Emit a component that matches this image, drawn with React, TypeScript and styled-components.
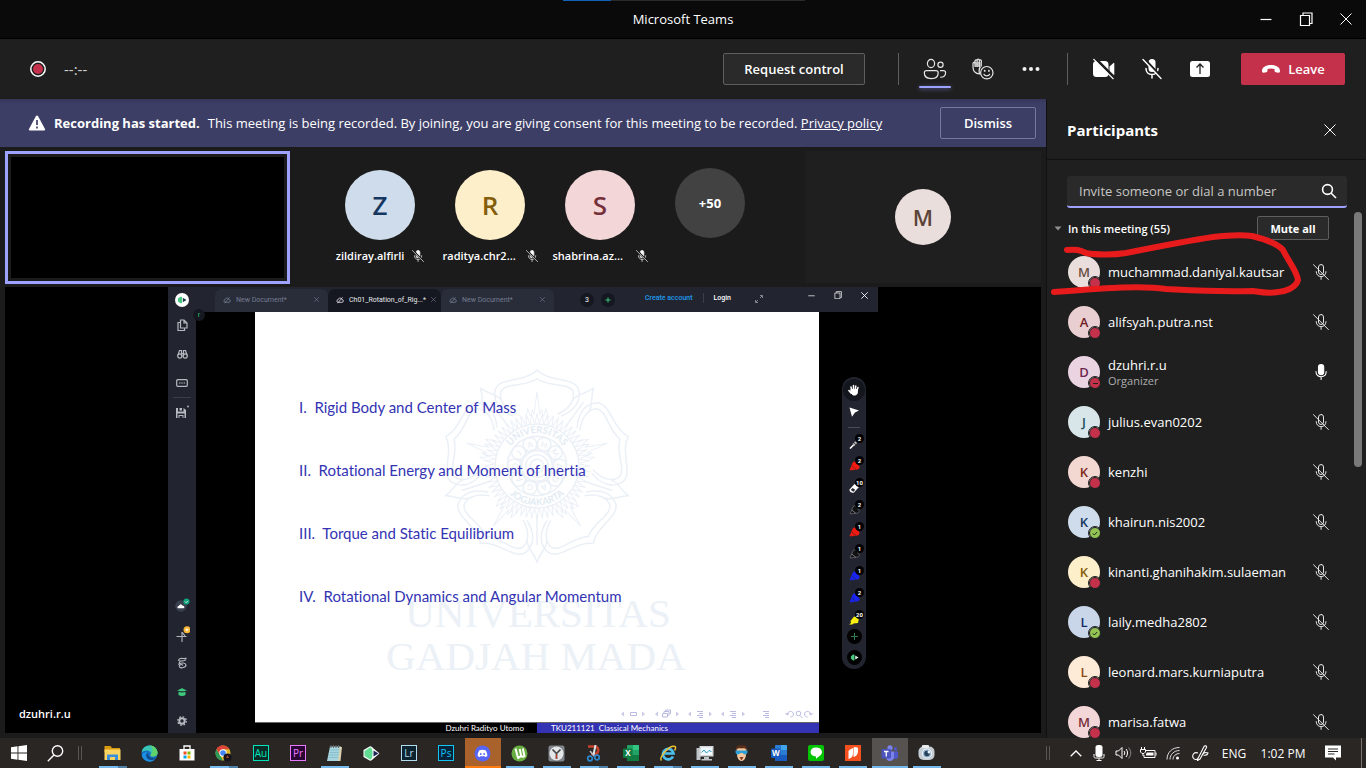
import React from "react";
import styled, { createGlobalStyle, css } from "styled-components";

const GlobalStyle = createGlobalStyle`
  * { box-sizing: border-box; }
  body { margin: 0; background: #1b1b1b; }
  button, input { font-family: inherit; }
  button { cursor: pointer; }
  svg { display: block; flex: none; }
`;

const Shell = styled.div`
  display: flex;
  flex-direction: column;
  height: 100vh;
  overflow: hidden;
  font-family: "Open Sans", "Noto Sans", sans-serif;
  font-size: 13px;
  color: #fff;
  background: #1b1b1b;
`;

/* ---------- title bar ---------- */

const TitleBar = styled.header`
  position: relative;
  display: flex;
  align-items: center;
  justify-content: flex-end;
  flex: none;
  height: 39px;
  background: #0a0a0a;
  border-bottom: 1px solid #000;
`;

const LoadLine = styled.div`
  position: absolute;
  top: 0;
  left: 50%;
  width: 242px;
  height: 1px;
  margin-left: -120px;
  background: linear-gradient(to right, #0f62b8 48px, #2a2a2a 48px);
`;

const WindowTitle = styled.h1`
  position: absolute;
  inset: 0;
  margin: 0;
  font-size: 13px;
  font-weight: 400;
  line-height: 38px;
  text-align: center;
  pointer-events: none;
`;

const WindowButton = styled.button`
  display: flex;
  align-items: center;
  justify-content: center;
  width: 40px;
  height: 38px;
  padding: 0;
  border: 0;
  background: none;
  color: #fff;
`;

/* ---------- call toolbar ---------- */

const CallBar = styled.div`
  display: flex;
  align-items: center;
  flex: none;
  height: 60px;
  padding: 0 21px 0 30px;
  background: #1f1f1f;
`;

const Timer = styled.span`
  flex: 1;
  padding-left: 18px;
  font-size: 15px;
  color: #d0d0d0;
`;

const OutlineButton = styled.button<{ $width: number; $small?: boolean; $clear?: boolean }>`
  width: ${(p) => p.$width}px;
  height: ${(p) => (p.$small ? 24 : 32)}px;
  padding: 0;
  border: 1px solid ${(p) => (p.$clear ? "#77789c" : "#605e5c")};
  border-radius: 2px;
  background: ${(p) => (p.$clear ? "transparent" : "#2a2a2a")};
  color: #fff;
  font-size: ${(p) => (p.$small ? 11 : 13)}px;
  font-weight: ${(p) => (p.$small ? 700 : 600)};
  flex: none;
`;

const Divider = styled.div<{ $first?: boolean }>`
  width: 1px;
  height: 32px;
  margin: 0 12px 0 ${(p) => (p.$first ? 33 : 12)}px;
  background: #605e5c;
`;

const CallButton = styled.button<{ $active?: boolean }>`
  position: relative;
  display: flex;
  align-items: center;
  justify-content: center;
  width: 48px;
  height: 48px;
  padding: 0;
  border: 0;
  background: none;
  color: #fff;
  ${(p) =>
    p.$active &&
    css`
      &::after {
        content: "";
        position: absolute;
        left: 8px;
        right: 8px;
        bottom: 5px;
        height: 2px;
        border-radius: 1px;
        background: #9ea2ff;
        box-shadow: 0 1px 4px #6264a7;
      }
    `}
`;

const LeaveButton = styled.button`
  display: flex;
  align-items: center;
  justify-content: center;
  gap: 7px;
  width: 104px;
  height: 32px;
  margin-left: 17px;
  padding: 0;
  border: 0;
  border-radius: 2px;
  background: #c4314b;
  color: #fff;
  font-size: 13px;
  font-weight: 600;
`;

/* ---------- body ---------- */

const Body = styled.div`
  display: flex;
  flex: 1;
  min-height: 0;
`;

const Meeting = styled.main`
  display: flex;
  flex-direction: column;
  flex: 1;
  min-width: 0;
`;

const Banner = styled.section`
  display: flex;
  align-items: center;
  flex: none;
  height: 48px;
  padding: 0 10px 0 28px;
  background: linear-gradient(#35365a, #3d3e66 5px);
`;

const BannerText = styled.p`
  flex: 1;
  margin: 0 0 0 8px;
  font-size: 13px;
  font-weight: 500;
  line-height: 20px;
  white-space: nowrap;
  b { margin-right: 8px; font-weight: 700; }
  a { color: #fff; }
`;

const Strip = styled.section`
  display: flex;
  align-items: flex-start;
  flex: none;
  height: 140px;
  padding: 4px 5px 0;
`;

const VideoTile = styled.div`
  width: 285px;
  height: 133px;
  padding: 3px;
  border: 3px solid #9ea2ff;
  background: #000 content-box;
  flex: none;
`;

const Attendees = styled.ul`
  display: flex;
  flex: 1;
  margin: 0;
  padding: 19px 0 0 35px;
  list-style: none;
`;

const Attendee = styled.li`
  display: flex;
  flex-direction: column;
  align-items: center;
  gap: 6px;
  width: 110px;
`;

const Avatar = styled.span<{ $bg: string; $fg: string; $size: number }>`
  position: relative;
  display: flex;
  align-items: center;
  justify-content: center;
  flex: none;
  width: ${(p) => p.$size}px;
  height: ${(p) => p.$size}px;
  border-radius: 50%;
  background: ${(p) => p.$bg};
  color: ${(p) => p.$fg};
  font-size: ${(p) => (p.$size > 60 ? 26 : p.$size > 40 ? 22 : 13)}px;
  font-weight: 600;
`;

const AttendeeName = styled.span<{ $clipped?: boolean }>`
  display: flex;
  align-items: center;
  gap: 8px;
  font-size: 11px;
  line-height: 20px;
  font-weight: 600;
  white-space: nowrap;
  span { ${(p) => p.$clipped && "width: 75px;"} }
`;

const MoreBubble = styled.button`
  width: 70px;
  height: 70px;
  margin: -2px 0 0 20px;
  padding: 0;
  border: 0;
  border-radius: 50%;
  background: #424242;
  color: #fff;
  font-size: 13px;
  font-weight: 700;
`;

const SelfTile = styled.div`
  display: flex;
  align-items: center;
  justify-content: center;
  width: 236px;
  height: 132px;
  background: #1f1f1f;
`;

const Stage = styled.section`
  position: relative;
  display: flex;
  justify-content: center;
  flex: 1;
  min-height: 0;
  margin: 0 5px 5px;
  background: #000;
`;

const PresenterName = styled.span`
  position: absolute;
  left: 14px;
  bottom: 10px;
  font-size: 11px;
  line-height: 18px;
  font-weight: 600;
`;

/* ---------- shared screen ---------- */

const Screen = styled.div`
  position: relative;
  display: flex;
  flex-direction: column;
  height: 100%;
  aspect-ratio: 710 / 446;
  font-family: Roboto, sans-serif;
  font-size: 7px;
`;

const AppBar = styled.div`
  display: flex;
  align-items: center;
  flex: none;
  height: 25px;
  padding: 0 10px 0 7px;
  background: #22252f;
`;

const TabList = styled.div`
  display: flex;
  align-self: stretch;
  margin-left: 26px;
  padding-top: 2px;
`;

const DocTab = styled.button<{ $active?: boolean }>`
  display: flex;
  align-items: center;
  gap: 5px;
  width: 113px;
  padding: 0 9px 2px 8px;
  border: 0;
  border-radius: 7px 7px 0 0;
  background: ${(p) => (p.$active ? "#151820" : "#292d39")};
  color: ${(p) => (p.$active ? "#e6e8ec" : "#747c90")};
  font-size: 7px;
  white-space: nowrap;
  span { flex: 1; text-align: left; }
`;

const Dot = styled.button<{ $bg: string; $size: number; $gap?: number }>`
  display: flex;
  align-items: center;
  justify-content: center;
  flex: none;
  width: ${(p) => p.$size}px;
  height: ${(p) => p.$size}px;
  margin: 0 0 0 ${(p) => p.$gap ?? 0}px;
  padding: 0;
  border: 0;
  border-radius: 50%;
  background: ${(p) => p.$bg};
  color: #fff;
  font-size: 7px;
`;

const AccountLinks = styled.div`
  display: flex;
  align-items: center;
  gap: 10px;
  margin-left: 30px;
  padding-bottom: 3px;
  font-weight: 500;
  line-height: 10px;
  white-space: nowrap;
  a { color: #fff; text-decoration: none; }
  a:first-child { padding-right: 10px; border-right: 1px solid #3a3f4c; color: #1d9bf0; }
`;

const AppBarEnd = styled.div`
  display: flex;
  flex: 1;
  align-items: center;
  justify-content: flex-end;
  gap: 19px;
  padding-bottom: 9px;
  svg:first-child { margin: 8px 26px 0 0; }
`;

const Workspace = styled.div`
  display: flex;
  flex: 1;
  min-height: 0;
  background: #000;
`;

const Rail = styled.nav`
  position: relative;
  display: flex;
  flex-direction: column;
  justify-content: space-between;
  width: 28px;
  padding-top: 1px;
  flex: none;
  background: #22252f;
`;

const RailGroup = styled.div`
  display: flex;
  flex-direction: column;
  align-items: center;
  gap: 5px;
`;

const RailRule = styled.div`
  width: 18px;
  height: 1px;
  margin: -3px 0;
  background: #3a3e4a;
`;

const RailButton = styled.button`
  display: flex;
  align-items: center;
  justify-content: center;
  width: 28px;
  height: 24px;
  padding: 0;
  border: 0;
  background: none;
  color: #b6b9c0;
`;

const RailHandle = styled.span`
  position: absolute;
  top: -3px;
  right: -9px;
  width: 12px;
  height: 12px;
  border-radius: 50%;
  background: #151820;
  color: #2fae6a;
  font-size: 8px;
  line-height: 11px;
  text-align: center;
`;

const Slide = styled.article`
  position: relative;
  display: flex;
  flex-direction: column;
  flex: 1;
  margin: 0 59px;
  background: #fff;
  color: #3333b3;
  font-family: Lato, sans-serif;
  font-variant-ligatures: none;
`;

const Watermark = styled.svg`
  position: absolute;
  top: 0;
  left: 50%;
  margin-left: -282px;
`;

const Outline = styled.ol`
  position: relative;
  display: flex;
  flex-direction: column;
  flex: 1;
  gap: 43px;
  margin: 0;
  padding: 85px 0 0 44px;
  list-style: none;
  font-size: 15px;
  line-height: 20px;
  white-space: pre;
`;

const SlideNav = styled.div`
  position: relative;
  display: flex;
  justify-content: flex-end;
  padding: 0 6px 3px 0;
`;

const SlideFooter = styled.footer`
  display: flex;
  flex: none;
  height: 11px;
  border-top: 1px solid #666;
  color: #fff;
  font-size: 8px;
  line-height: 11px;
  white-space: pre;
  span:first-child { width: 50%; padding-right: 13px; background: #000; text-align: right; }
  span:last-child { width: 50%; padding-left: 14px; background: #3333b3; }
`;

const ToolPill = styled.div`
  position: absolute;
  top: 90px;
  right: 12px;
  display: flex;
  flex-direction: column;
  align-items: center;
  width: 24px;
  height: 292px;
  padding-top: 2px;
  border-radius: 12px;
  background: #22252f;
`;

const PillRule = styled.div`
  width: 12px;
  height: 1px;
  margin: 4px 0 3px;
  background: #4a4e5a;
`;

const Tool = styled.button<{ $on?: boolean }>`
  position: relative;
  display: flex;
  align-items: center;
  justify-content: center;
  width: 22px;
  height: 22px;
  padding: 0;
  border: 0;
  border-radius: 50%;
  flex: none;
  background: ${(p) => (p.$on ? "#14161d" : "none")};
  color: #fff;
`;

const ToolCount = styled.span`
  position: absolute;
  top: 3px;
  right: 1px;
  width: 9px;
  height: 9px;
  border-radius: 50%;
  background: #000;
  color: #fff;
  font-size: 6px;
  font-weight: 700;
  line-height: 9px;
  text-align: center;
`;

const PillEnd = styled.div`
  display: flex;
  flex-direction: column;
  gap: 6px;
`;

/* ---------- participants ---------- */

const Panel = styled.aside`
  position: relative;
  display: flex;
  flex-direction: column;
  width: 320px;
  flex: none;
  overflow: hidden;
  border-left: 1px solid #111;
  background: #1f1f1f;
`;

const PanelHeader = styled.div`
  display: flex;
  align-items: center;
  justify-content: space-between;
  flex: none;
  height: 61px;
  padding: 2px 28px 0 20px;
  border-bottom: 1px solid #111;
  h2 { margin: 0; font-size: 15px; font-weight: 700; }
  button { width: 16px; height: 24px; }
`;

const InviteBox = styled.label`
  display: flex;
  align-items: center;
  flex: none;
  height: 32px;
  margin: 16px 19px 0 20px;
  padding-right: 10px;
  border-radius: 3px;
  border-bottom: 2px solid #9ea2ff;
  background: #2a2a2a;
  input {
    flex: 1;
    min-width: 0;
    padding: 0 0 0 12px;
    border: 0;
    outline: 0;
    background: none;
    color: #fff;
    font-size: 13px;
    font-weight: 500;
  }
  input::placeholder { color: #c8c6c4; opacity: 1; }
`;

const GroupHeader = styled.div`
  display: flex;
  align-items: center;
  flex: none;
  height: 39px;
  padding: 1px 37px 0 7px;
  span { flex: 1; padding-left: 6px; font-size: 11px; font-weight: 600; }
`;

const Roster = styled.ul`
  flex: 1;
  min-height: 0;
  margin: 0;
  padding: 0;
  overflow: hidden;
  list-style: none;
`;

const RosterRow = styled.li`
  display: flex;
  align-items: center;
  gap: 8px;
  height: 50px;
  padding: 0 37px 0 21px;
`;

const RosterName = styled.div`
  flex: 1;
  font-weight: 500;
  line-height: 18px;
  white-space: nowrap;
  small { display: block; color: #adadad; font-size: 11px; font-weight: 500; line-height: 14px; }
`;

const Presence = styled.span<{ $state: Status }>`
  position: absolute;
  right: -1px;
  bottom: -1px;
  display: flex;
  align-items: center;
  justify-content: center;
  width: 12px;
  height: 12px;
  border: 1px solid #1f1f1f;
  outline: 1px solid #1f1f1f;
  border-radius: 50%;
  background: ${(p) => (p.$state === "free" ? "#92c353" : "#c4314b")};
`;

const ScrollThumb = styled.div`
  position: absolute;
  top: 113px;
  right: 4px;
  width: 8px;
  height: 255px;
  border-radius: 4px;
  background: #797979;
`;

const Scribble = styled.svg`
  position: absolute;
  top: 0;
  left: -1px;
  pointer-events: none;
`;

/* ---------- taskbar ---------- */

const Taskbar = styled.footer`
  display: flex;
  flex: none;
  height: 30px;
  background: #2a2624;
`;

const TaskButton = styled.button<{ $run?: Run }>`
  position: relative;
  display: flex;
  align-items: center;
  justify-content: center;
  width: 37px;
  height: 30px;
  padding: 0;
  border: 0;
  background: ${(p) =>
    p.$run === "alert"
      ? "linear-gradient(to right, transparent 1px, #a9622b 1px)"
      : p.$run === "front"
        ? "linear-gradient(to right, transparent 1px, #565250 1px)"
        : "none"};
  ${(p) =>
    p.$run &&
    css`
      &::after {
        content: "";
        position: absolute;
        left: ${p.$run === "alert" || p.$run === "front" ? 1 : 5}px;
        right: ${p.$run === "alert" || p.$run === "front" ? 0 : 4}px;
        bottom: 0;
        height: 2px;
        background: ${p.$run === "alert"
          ? "#ff7a0f"
          : p.$run === "stack"
            ? "linear-gradient(to right, #76b9ed 19px, #4f80a8 19px)"
            : "#76b9ed"};
      }
    `}
`;

const Gripper = styled.div`
  width: 4px;
  height: 14px;
  margin: 8px 0 0;
  border: solid #5a5653;
  border-width: 0 1px;
`;

const PinnedApps = styled.div`
  display: flex;
  flex: 1;
  padding-left: 12px;
`;

const StartGroup = styled.div`
  display: flex;
  width: 78px;
`;

const Tray = styled.div`
  display: flex;
  align-items: center;
  padding-left: 17px;
`;

const TrayButton = styled.button<{ $width: number }>`
  display: flex;
  align-items: center;
  justify-content: center;
  width: ${(p) => p.$width}px;
  height: 30px;
  padding: 0;
  border: 0;
  background: none;
  color: #fff;
  font-size: 12px;
  white-space: nowrap;
`;

const DesktopEdge = styled.div`
  width: 5px;
  height: 30px;
  margin-left: 10px;
  border-left: 1px solid #77736f;
`;

/* ---------- data ---------- */

type Status = "busy" | "dnd" | "free";
type Run = "open" | "stack" | "alert" | "front";

const attendees = [
  { letter: "Z", name: "zildiray.alfirli", bg: "#cedceb", fg: "#15365f" },
  { letter: "R", name: "raditya.chr2...", bg: "#feefcb", fg: "#845e0b", clipped: true },
  { letter: "S", name: "shabrina.az...", bg: "#f3d6d8", fg: "#75303b", clipped: true },
];

const roster: { name: string; bg: string; fg: string; state: Status; role?: string }[] = [
  { name: "muchammad.daniyal.kautsar", bg: "#e9dedb", fg: "#6a4e43", state: "busy" },
  { name: "alifsyah.putra.nst", bg: "#e9cfd1", fg: "#6b1d26", state: "busy" },
  { name: "dzuhri.r.u", bg: "#ebd4e2", fg: "#69294f", state: "dnd", role: "Organizer" },
  { name: "julius.evan0202", bg: "#d8e6ea", fg: "#22535f", state: "busy" },
  { name: "kenzhi", bg: "#f3d7d1", fg: "#7c2b1e", state: "busy" },
  { name: "khairun.nis2002", bg: "#cedceb", fg: "#15365f", state: "free" },
  { name: "kinanti.ghanihakim.sulaeman", bg: "#feefcb", fg: "#845e0b", state: "busy" },
  { name: "laily.medha2802", bg: "#c9d5e9", fg: "#152c66", state: "free" },
  { name: "leonard.mars.kurniaputra", bg: "#fdead7", fg: "#8a4b12", state: "busy" },
  { name: "marisa.fatwa", bg: "#f3d6d8", fg: "#75303b", state: "busy" },
];

const tools: { kind: string; color: string; count: number }[] = [
  { kind: "brush", color: "#fff", count: 2 },
  { kind: "pen", color: "#f21a10", count: 2 },
  { kind: "eraser", color: "#fff", count: 10 },
  { kind: "pen", color: "#111", count: 2 },
  { kind: "pen", color: "#f21a10", count: 1 },
  { kind: "pen", color: "#111", count: 1 },
  { kind: "pen", color: "#1a24f0", count: 1 },
  { kind: "pen", color: "#1a24f0", count: 2 },
  { kind: "marker", color: "#f8ee10", count: 20 },
];

/* ---------- icons ---------- */

const MicOff = ({ size = 16, filled = false }: { size?: number; filled?: boolean }) => (
  <svg width={size} height={size} viewBox="0 0 16 16" fill="none" stroke="#e6e6e6" strokeWidth="1" strokeLinecap="round">
    <rect x="5.500" y="0.500" width="5" height="10" rx="2.500" fill={filled ? "#fff" : "none"} />
    <path d="M3.2 7.6c0 3 2 5 4.900 5s4.900-2 4.900-5M8.100 12.800v2.600" />
    {filled && <path d="M1 0.400 16 15.800" stroke="#1b1b1b" strokeWidth="2.600" />}
    <path d="M0.500 0.700 15.500 15.600" />
  </svg>
);

const MicOn = ({ size = 16 }: { size?: number }) => (
  <svg width={size} height={size} viewBox="0 0 16 16" fill="none" stroke="#fff" strokeWidth="1.100" strokeLinecap="round">
    <rect x="5.500" y="0.600" width="5.200" height="10" rx="2.600" fill="#fff" />
    <path d="M3 7.600c0 3.200 2 5.100 5.100 5.100s5.100-1.900 5.100-5.100M8.100 12.800v2.600" />
  </svg>
);

const Cross = ({ size, color = "#fff", w = 1 }: { size: number; color?: string; w?: number }) => (
  <svg width={size} height={size} viewBox="0 0 12 12" stroke={color} strokeWidth={w} fill="none">
    <path d="M0.500 0.500 11.500 11.500M11.500 0.500 0.500 11.500" />
  </svg>
);

const RestoreGlyph = ({ size }: { size: number }) => (
  <svg width={size} height={size} viewBox="0 0 14 14" stroke="#fff" strokeWidth="1.200" fill="none">
    <path d="M1.500 3.500h9v10h-9zM4 3V1h9v10.500h-2" />
  </svg>
);

const Dash = ({ size }: { size: number }) => (
  <svg width={size} height={size} viewBox="0 0 12 12" stroke="#fff" fill="none">
    <path d="M0.500 6.500h11" strokeWidth="1.200" />
  </svg>
);

const PeopleIcon = () => (
  <svg width="24" height="24" viewBox="0 0 24 24" fill="none" stroke="#e6e6e6" strokeWidth="1.200">
    <ellipse cx="8" cy="6.500" rx="3.600" ry="4.100" />
    <circle cx="17.500" cy="7.800" r="2.600" />
    <path d="M5.500 13.700h7.300c1.500 0 2.400.9 2.400 2 0 3.700-2.800 5.900-7 5.900s-6.900-2.200-6.900-5.900c0-1.100.9-2 2.400-2z" />
    <path d="M17 13.700h3.200c1.500 0 2.400.9 2.400 2 0 3.100-2.200 4.800-5.400 4.500" />
  </svg>
);

const ReactIcon = () => (
  <svg width="24" height="24" viewBox="0 0 24 24" fill="none" stroke="#e6e6e6" strokeWidth="1.200" strokeLinecap="round">
    <path d="M2 10V6.500c0-1.400 2-1.400 2 0V4c0-1.600 2.100-1.600 2.100 0v-.8c0-1.500 2.200-1.500 2.200 0V4c0-1.400 2.100-1.400 2.100 0v4.500c-1.500 1.400-2.400 3.400-2.300 5.500 0 1.200.2 2.200.6 3C4.500 16.700 2 14 2 10z" />
    <path d="M4 5h6.400v5H4z" fill="#9a9a9a" stroke="none" />
    <path d="M4 5v4.500M6.100 4v5.500M8.300 4v5.500" />
    <circle cx="15.800" cy="15.700" r="6.200" />
    <path d="M13 17.300c1.300 2 4.300 2 5.600 0" />
    <path d="M13.700 13.700v.2M17.900 13.700v.2" strokeWidth="1.800" />
  </svg>
);

const CameraOff = () => (
  <svg width="24" height="24" viewBox="0 0 24 24" fill="#fff">
    <path d="M4.500 4H13a3.500 3.500 0 0 1 3.500 3.500v9A3.500 3.500 0 0 1 13 20H4.500A3.500 3.500 0 0 1 1 16.500v-9A3.500 3.500 0 0 1 4.500 4zM17.500 9.500l4-3.600c.3-.2.800 0 .8.400v11.400c0 .4-.5.600-.8.400l-4-3.600z" />
    <path d="M3 1l21 21" stroke="#1f1f1f" strokeWidth="2.500" />
    <path d="M1.500 2l20 20" stroke="#fff" strokeWidth="1.300" />
    <path d="M2.400 1.500l20 20" stroke="#1f1f1f" strokeWidth="1" />
  </svg>
);

const ToolbarMicOff = () => (
  <svg width="24" height="24" viewBox="0 0 24 24" fill="none" stroke="#fff" strokeLinecap="round">
    <rect x="8.500" y="2" width="7" height="13" rx="3.500" fill="#fff" stroke="none" />
    <path d="M6 11.500c0 3.700 2.500 6 6 6s6-2.300 6-6M12 17.500V21" strokeWidth="1.500" />
    <path d="M4.500 2 22 20.500" stroke="#1f1f1f" strokeWidth="2.500" />
    <path d="M3 2.500 21 21.500" strokeWidth="1.400" />
  </svg>
);

const BrandMark = ({ size }: { size: number }) => (
  <svg width={size} height={size} viewBox="0 0 10 10">
    <path d="M1 3.500 3.500 1.800C5 1.500 5 2 5 3v4c0 1 0 1.500-1.500 1.200L1 6.500z" fill="#48c77f" />
    <path d="M5.800 2.700 9.500 5 5.800 7.300z" fill="#1c3a4a" />
  </svg>
);

const BrandMarkLight = ({ size }: { size: number }) => (
  <svg width={size} height={size} viewBox="0 0 10 10">
    <path d="M1 3.500 3.500 1.800C5 1.500 5 2 5 3v4c0 1 0 1.500-1.500 1.200L1 6.500z" fill="#48c77f" />
    <path d="M5.800 2.700 9.500 5 5.800 7.300z" fill="#d5f3e2" />
  </svg>
);

const CloudOff = () => (
  <svg width="8" height="8" viewBox="0 0 12 12" fill="none" stroke="currentColor" strokeWidth="1.200">
    <path d="M3 9.500C.5 9 .8 5.800 3 5.800 3.200 2.500 8 2.200 8.800 5.200c3 .1 3 4.100.2 4.300zM2.500 10.800 9.800 2" />
  </svg>
);

const ToolGlyph = ({ kind, color }: { kind: string; color: string }) => {
  if (kind === "brush")
    return (
      <svg width="14" height="14" viewBox="0 0 14 14" fill="none">
        <path d="M3 13.500 6.500 10" stroke="#fff" strokeWidth="1.600" />
        <path d="M6.500 10 12 4" stroke="#c8c8c8" strokeWidth="2.600" strokeDasharray="1.500 .8" />
      </svg>
    );
  if (kind === "eraser")
    return (
      <svg width="14" height="14" viewBox="0 0 14 14">
        <path d="m2.500 10.500 5-5.500 4.500 3-5 5.500c-2 1-5-1-4.500-3z" fill="#fff" />
        <path d="m3.800 11 1.800-2 2.600 1.700-1.700 2z" fill="#22252f" />
      </svg>
    );
  if (kind === "marker")
    return (
      <svg width="14" height="14" viewBox="0 0 14 14" fill={color}>
        <path d="M2 13.500 4 12l-.5-2L7 5.500l5 1.500-1 5-4.500.5-1 1z" />
      </svg>
    );
  const dark = color === "#111";
  return (
    <svg width="14" height="14" viewBox="0 0 14 14" strokeLinejoin="round">
      <path d="M3 13 6 6C6.500 4.500 8 4.500 9 5.500L12 9.500C12.500 10.500 12 11.500 11 12z" fill={color} stroke={dark ? "#66666c" : color} strokeWidth=".8" />
      <path d="m4.800 9 4.200 3.500" stroke={dark ? "#77777c" : "#22252f88"} />
    </svg>
  );
};

const spokes = [0, 72, 144, 216, 288];
const burst = Array.from({ length: 60 }, (_, i) => i * 6);
const innerLetters = [..."GADJAHMADA"];

const Seal = () => (
  <Watermark width="564" height="410" viewBox="0 0 564 410" aria-hidden="true">
    <g transform="translate(282 154) scale(.333)" fill="none" stroke="#ebf0f7" strokeWidth="4.500" strokeLinejoin="round">
      {spokes.map((a) => (
        <g key={a} transform={`rotate(${a})`}>
          <path d="M-72-150C-112-166-134-195-125-230-112-268-38-250 0-288 38-250 112-268 125-230 134-195 112-166 72-150" />
          <path d="M-62-156C-98-172-116-200-108-224-92-252-36-236 0-262 36-236 92-252 108-224 116-200 98-172 62-156" />
          <path d="M-18-150-14-170-9-155 0-222 9-155 14-170 18-150M-34-142-28-172-20-150M34-142 28-172 20-150" strokeWidth="3" />
          <g transform="rotate(36)">
            <path d="M-30-222C-28-252-8-260 0-289 8-260 28-252 30-222M0-238V-150" />
          </g>
        </g>
      ))}
      {burst.map((a) => (
        <path key={a} d="M-6-128 0-158 6-128" transform={`rotate(${a})`} strokeWidth="3" />
      ))}
      <circle r="126" />
      <circle r="89" />
      <circle r="46" />
      <circle r="34" />
      <circle r="20" />
      {innerLetters.map((letter, i) => (
        <g key={i} transform={`rotate(${i * 36 + 198})`}>
          <path d="M-20-50C-24-84-12-88 0-88 12-88 24-84 20-50Z" />
          <text y="-58" textAnchor="middle" fontSize="25" fill="#e6edf5" stroke="none" fontFamily="Lato, sans-serif">
            {letter}
          </text>
        </g>
      ))}
      <path id="sealTop" d="M-99 0A99 99 0 0 1 99 0" stroke="none" />
      <path id="sealBottom" d="M-118 0A118 118 0 0 0 118 0" stroke="none" />
      <g fill="#e3ebf3" stroke="none" fontFamily="Lato, sans-serif" fontSize="29" fontWeight="700" textAnchor="middle">
        <text><textPath href="#sealTop" startOffset="50%">UNIVERSITAS</textPath></text>
        <text><textPath href="#sealBottom" startOffset="50%">JOGJAKARTA</textPath></text>
      </g>
    </g>
    <g fill="#ebf1f6" fontFamily="Liberation Serif, serif" fontSize="41" textAnchor="middle">
      <text x="283" y="315">UNIVERSITAS</text>
      <text x="281" y="358">GADJAH MADA</text>
    </g>
  </Watermark>
);

const NavSymbols = () => (
  <svg width="192" height="10" viewBox="0 0 192 10" fill="none" stroke="#b9b9e2" strokeWidth="1">
    {[0, 34, 67, 100].map((x) => (
      <g key={x} fill="#c9c9ea" stroke="none">
        <path d={`M${x + 3} 2.500v5L${x} 5z`} />
        <path d={`M${x + 21} 2.500v5l3-2.500z`} />
      </g>
    ))}
    <path d="M9.500 3.500h6v3h-6zM41.500 4.500h5v3.500h-5zM43 4V2.500h5V6H47M44.500 2V1h5v3.500h-1" />
    <path d="M76 2.500h6M78 4.500h4M76 6.500h6M78 8.500h4M109 2.500h6M111 4.500h4M109 6.500h6M111 8.500h4M142 2.500h6M144 4.500h4M142 6.500h6M144 8.500h4" />
    <path d="M166 5.500c1-4 6-4 6.500-.5 0 2-1.500 3-3 3M164.500 4l1.500 2 2-1.500M190 5.500c-1-4-6-4-6.500-.5 0 2 1.500 3 3 3M191.500 4 190 6l-2-1.500" />
    <circle cx="177.500" cy="4.500" r="2.300" />
    <path d="m179 6.500 2.500 2.500" />
  </svg>
);

const Tile = ({ label, line, bg }: { label: string; line: string; bg: string }) => (
  <svg width="16" height="16" viewBox="0 0 16 16">
    <rect x=".5" y=".5" width="15" height="15" fill={bg} stroke={line} />
    <text x="8" y="12" textAnchor="middle" fontSize="10" fill={line} fontFamily="Open Sans, sans-serif">{label}</text>
  </svg>
);

const OfficeTile = ({ label, dark, mid, light }: { label: string; dark: string; mid: string; light: string }) => (
  <svg width="16" height="16" viewBox="0 0 16 16">
    <rect x="4" width="12" height="16" rx="1" fill={mid} />
    <path d="M10 0h5a1 1 0 0 1 1 1v4h-6z" fill={light} />
    <path d="M4 10h12v5a1 1 0 0 1-1 1H5a1 1 0 0 1-1-1z" fill={dark} />
    <rect y="3.500" width="9.500" height="9.500" rx="1" fill={dark} />
    <text x="4.800" y="11.300" textAnchor="middle" fontSize="8" fontWeight="700" fill="#fff" fontFamily="Open Sans, sans-serif">{label}</text>
  </svg>
);

const apps: { name: string; run?: Run; icon: React.ReactNode }[] = [
  {
    name: "File Explorer", run: "stack",
    icon: <svg width="17" height="16" viewBox="0 0 17 16"><path d="M0.500 1h6l1.500 2h8v4H.5z" fill="#d99a12" /><path d="M.5 4.500h16V15H.5z" fill="#fcd462" /><path d="M3 15V9.500h11V15h-3v-3H6v3z" fill="#3a8fdc" /></svg>,
  },
  {
    name: "Edge",
    icon: (
      <svg width="17" height="17" viewBox="0 0 17 17">
        <circle cx="8.500" cy="8.500" r="8" fill="#1470c4" />
        <path d="M.6 7.500C1.500-1.500 15-2 16.500 7c.5 3-1.800 4.600-4.500 4.600-2 0-3.200-.8-2.300-2 .9-2-.9-4-3.700-4C3.500 5.600 1.500 6.500.6 7.500z" fill="#3ac5b4" />
        <path d="M9 .5c4 .2 7 3 7.500 6.500.5 3-1.800 4.600-4.500 4.600-2 0-3.200-.8-2.300-2C13 6 11.500 2 9 .5z" fill="#5fd46a" />
        <path d="M5.200 10c0 4 4.300 6.500 9 4.200C10.500 18.500 2.500 17 .8 10.500 1.300 8 3.500 6.800 6.500 7 5.600 7.800 5.200 9 5.200 10z" fill="#1b8ee0" />
        <path d="M7.200 8.500c-.5 3.500 3 5.500 8 4-3.500 4.200-10 2.500-10-2.500 0-1 .8-1.500 2-1.500z" fill="#114a8b" />
      </svg>
    ),
  },
  {
    name: "Store",
    icon: <svg width="16" height="16" viewBox="0 0 16 16"><path d="M5 4V1h6v3" fill="none" stroke="#fff" strokeWidth="1.300" /><path d="M.5 4h15v11.500H.5z" fill="#fff" /><path d="M4.500 6.500h3v3h-3z" fill="#f25022" /><path d="M8.500 6.500h3v3h-3z" fill="#7fba00" /><path d="M4.500 10.500h3v3h-3z" fill="#00a4ef" /><path d="M8.500 10.500h3v3h-3z" fill="#ffb900" /></svg>,
  },
  {
    name: "Chrome", run: "stack",
    icon: <svg width="17" height="17" viewBox="0 0 17 17"><circle cx="8" cy="8" r="7.500" fill="#e2b92d" /><path d="M1.500 4.200A7.500 7.500 0 0 1 14.500 4.300H8z" fill="#dc4437" /><path d="M1.500 4.200 8 15.500A7.500 7.500 0 0 1 1.500 4.200z" fill="#2a9a58" /><path d="M1.500 4.200 5 10l3-5.700L8 .5A7.500 7.500 0 0 0 1.500 4.200z" fill="#dc4437" /><circle cx="8" cy="8" r="3.700" fill="#fff" /><circle cx="8" cy="8" r="2.800" fill="#4285f4" /><circle cx="12.500" cy="12.500" r="4" fill="#16141c" /><path d="M11 13h3l-1.500-3z" fill="#a3422c" /></svg>,
  },
  { name: "Audition", icon: <Tile label="Au" line="#00e4bb" bg="#0a2b26" /> },
  { name: "Premiere", icon: <Tile label="Pr" line="#ea77ff" bg="#2a0634" /> },
  {
    name: "Notepad", run: "open",
    icon: <svg width="17" height="17" viewBox="0 0 17 17"><path d="M4 1.500h11L13 16H1z" fill="#a6d5e0" /><path d="M13.500 2H16l-1.500 14H12z" fill="#d9d0b0" /><path d="M4.500 5h9M4 7.500h9M3.500 10h9M3 12.500h9" stroke="#7fb9c8" strokeWidth=".8" /><path d="M5 0v3M7.500 0v3M10 0v3M12.500 0v3" stroke="#666" /></svg>,
  },
  {
    name: "Drawing board",
    icon: <svg width="17" height="15" viewBox="0 0 17 15"><path d="M.5 4 7 .3C8 0 9 1 10 2l6.500 5.500L10 13c-1 1-2 2-3 1.700L.5 11z" fill="#fff" /><path d="M1.500 5 7 1.500c1.500 0 2.500 1.500 2.500 6s-1 6-2.500 6L1.500 10z" fill="#5fdc92" /><path d="m10.500 4.500 5 3-5 3z" fill="#1c2456" /></svg>,
  },
  { name: "Lightroom", icon: <Tile label="Lr" line="#b4dcf0" bg="#0c2430" /> },
  { name: "Photoshop", icon: <Tile label="Ps" line="#12c3f4" bg="#07233a" /> },
  {
    name: "Discord", run: "alert",
    icon: <svg width="17" height="17" viewBox="0 0 17 17"><circle cx="8.500" cy="8.500" r="8" fill="#5865f2" /><path d="M5.500 5.300c2-.8 4-.8 6 0 1.300 1.700 1.900 3.600 1.800 5.700-.8.600-1.600.9-2.300 1l-.7-1.100c-1.200.3-2.400.3-3.600 0L6 12c-.8-.1-1.500-.4-2.300-1-.1-2.100.5-4 1.800-5.700z" fill="#fff" /><circle cx="6.800" cy="9" r=".9" fill="#5865f2" /><circle cx="10.200" cy="9" r=".9" fill="#5865f2" /></svg>,
  },
  {
    name: "uTorrent", run: "open",
    icon: <svg width="17" height="17" viewBox="0 0 17 17"><circle cx="8.500" cy="8.500" r="8" fill="#67ad3f" /><path d="M4.500 3.500 6.500 11c.6 1.800 3.600 1.300 3.500-1L8.700 4M10 10c.5 2 2 2.300 3.500 1.200L11.800 3.500M6 9.500 7.500 14" fill="none" stroke="#fff" strokeWidth="2" /></svg>,
  },
  {
    name: "Clock", run: "open",
    icon: <svg width="17" height="17" viewBox="0 0 17 17"><rect x=".5" y=".5" width="16" height="16" rx="2" fill="#7f858a" /><circle cx="8.500" cy="8.500" r="7" fill="#e4e6e8" /><path d="m4.500 4.500 4 4V14M8.500 8.500l4-4" stroke="#444" strokeWidth="1.700" fill="none" /><path d="M8.500 9.500V14" stroke="#c2402c" strokeWidth="1.300" /></svg>,
  },
  {
    name: "Snipping Tool", run: "stack",
    icon: <svg width="15" height="17" viewBox="0 0 15 17" fill="none"><path d="M2 1.500h7c4.500 0 4 7.500 0 7.500H5" stroke="#c6402a" strokeWidth="2.600" /><path d="m9.500 0-2 10" stroke="#dfe5ea" strokeWidth="2" /><path d="m4 6 5 6" stroke="#b8c3cc" strokeWidth="1.500" /><circle cx="4" cy="13.500" r="2.300" stroke="#2b87cc" strokeWidth="1.700" /><circle cx="11" cy="12.500" r="2.300" stroke="#2b87cc" strokeWidth="1.700" /></svg>,
  },
  { name: "Excel", run: "open", icon: <OfficeTile label="X" dark="#107c41" mid="#21a366" light="#33c481" /> },
  {
    name: "Internet Explorer", run: "stack",
    icon: <svg width="18" height="17" viewBox="0 0 18 17" fill="none"><path d="M14 11.500A5.300 5.300 0 1 1 14.500 8.500H5.500" stroke="#4cc1f0" strokeWidth="2.700" /><path d="M2.500 15.500C-.5 12 11-.5 16 1.500c1 .8.500 2.500-.5 4" stroke="#f2c233" strokeWidth="1.400" /></svg>,
  },
  {
    name: "Resource Monitor", run: "open",
    icon: <svg width="18" height="16" viewBox="0 0 18 16"><path d="M.5 3h4v12h-4z" fill="#bfc4c8" /><path d="M3.500 1h14v10.500h-14z" fill="#d5d9dc" /><path d="M5 2.500h11V10H5z" fill="#f2fafe" /><path d="M5.500 7.500 8 5l2.500 3L13 5.500l2.500 1" stroke="#2a9ac4" fill="none" /><path d="M8 12h5v2h3v1.500H5.500V14H8z" fill="#bfc4c8" /></svg>,
  },
  {
    name: "Assistant", run: "open",
    icon: <svg width="13" height="17" viewBox="0 0 13 17"><path d="M1.500 4C1.500 0 11.500 0 11.500 4L11 10c-.5 4.500-3 6-4.500 6S2.500 14.500 2 10z" fill="#f0c9a0" /><path d="M1.500 5C.5 0 4.500 0 6.500.5 9 0 12.500 0 11.500 5c-1-2-3-2-5-1.500C4.500 3 2.500 3 1.500 5z" fill="#5b2e1a" /><path d="M.5 5.500h12v2C12 10 9 10 7.500 8h-2C4 10 1 10 .5 7.500z" fill="#2c9fd6" /><path d="M4.500 12h4l-2 3.500z" fill="#8c3a20" /></svg>,
  },
  { name: "Word", run: "open", icon: <OfficeTile label="W" dark="#185abd" mid="#2b7cd3" light="#41a5ee" /> },
  {
    name: "Line", run: "open",
    icon: <svg width="16" height="16" viewBox="0 0 16 16"><rect width="16" height="16" rx="2" fill="#00c300" /><path d="M8 2.500c7 0 7.500 6.500 3.500 8.500L8 13.800V11.500C.5 11 1 2.500 8 2.500z" fill="#fff" /></svg>,
  },
  {
    name: "Nitro", run: "open",
    icon: <svg width="16" height="16" viewBox="0 0 16 16"><rect width="16" height="16" fill="#f4511e" /><path d="M3.500 6 5 4.500 8 3v6c0 2.500-2 4.500-4.500 5zM8.500 2.500 11 2l2 1v3c0 3-1.500 5.500-4.500 6z" fill="#fff" /></svg>,
  },
  {
    name: "Teams", run: "front",
    icon: <svg width="17" height="17" viewBox="0 0 17 17"><circle cx="9" cy="2.800" r="2.600" fill="#7b83eb" /><circle cx="14.500" cy="4" r="1.700" fill="#5059c9" /><path d="M12 6.500h5v5c0 2.500-3 3.500-5 1.500z" fill="#5059c9" /><path d="M5 6.500h8v5.500c0 5-8 5.500-8 0z" fill="#7b83eb" /><rect x=".5" y="4" width="9.500" height="9.500" rx="1" fill="#4b53bc" /><path d="M3 6.500h4.500M5.250 6.500v5" stroke="#fff" strokeWidth="1.300" /></svg>,
  },
  {
    name: "Camera", run: "open",
    icon: <svg width="17" height="16" viewBox="0 0 17 16"><rect x=".5" y="1.500" width="16" height="13.500" rx="5" fill="#c5cdd4" /><rect x="4" y="0" width="7" height="3" rx="1" fill="#e8ecef" /><circle cx="9" cy="8.500" r="5" fill="#f4f6f8" /><circle cx="9" cy="8.500" r="4" fill="#8fb0c8" /><circle cx="9" cy="8.500" r="2.700" fill="#25415c" /><circle cx="11" cy="7" r="1.500" fill="#e6f1f8" /></svg>,
  },
];

/* ---------- sections ---------- */

const SharedScreen = () => (
  <Screen>
    <AppBar>
      <Dot as="span" $bg="#fff" $size={14}><BrandMark size={10} /></Dot>
      <TabList>
        {["New Document*", "Ch01_Rotation_of_Rig...*", "New Document*"].map((t, i) => (
          <DocTab key={i} $active={i === 1}>
            <CloudOff />
            <span>{t}</span>
            <Cross size={5} color="#747c90" w={1.500} />
          </DocTab>
        ))}
      </TabList>
      <Dot $bg="#151820" $size={14} $gap={26}>3</Dot>
      <Dot $bg="#151820" $size={14} $gap={7}>
        <svg width="6" height="6" viewBox="0 0 6 6" stroke="#3cc77e"><path d="M3 .5v5M.5 3h5" /></svg>
      </Dot>
      <AccountLinks>
        <a href="#create">Create account</a>
        <a href="#login">Login</a>
      </AccountLinks>
      <AppBarEnd>
        <svg width="8" height="8" viewBox="0 0 8 8" fill="none" stroke="#7f8594"><path d="M5 .5h2.500V3M7.500.5 5 3M3 7.500H.5V5M.5 7.500 3 5" /></svg>
        <Dash size={7} />
        <RestoreGlyph size={8} />
        <Cross size={7} w={1.500} />
      </AppBarEnd>
    </AppBar>
    <Workspace>
      <Rail>
        <RailHandle>r</RailHandle>
        <RailGroup>
          <RailButton aria-label="Pages">
            <svg width="11" height="12" viewBox="0 0 11 12" fill="none" stroke="currentColor" strokeWidth="1.200"><path d="M3.500 1H7l3 3v5H3.500zM7 1v3h3M3 3.500H1v8h6.500V9.500" /></svg>
          </RailButton>
          <RailButton aria-label="Find">
            <svg width="11" height="10" viewBox="0 0 11 10" fill="none" stroke="currentColor" strokeWidth="1.200"><circle cx="2.800" cy="7" r="2.100" /><circle cx="8.200" cy="7" r="2.100" /><path d="M1 6 2.500 1.500h2V7M10 6 8.500 1.500h-2V7M4.500 4.500h2" /></svg>
          </RailButton>
          <RailButton aria-label="Keyboard">
            <svg width="12" height="8" viewBox="0 0 12 8" fill="none" stroke="currentColor" strokeWidth="1.200"><rect x=".7" y=".7" width="10.600" height="6.600" rx="1" /><path d="M3 4h1.500M5.300 4h1.500M7.600 4h1.500" /></svg>
          </RailButton>
          <RailRule />
          <RailButton aria-label="Save">
            <svg width="14" height="14" viewBox="0 0 14 14" fill="currentColor"><path d="M1 3h2v3.500h5.500V3L11 5v8H9.500V8.500h-7V13H1zM4.500 3h2.500v2.500H4.500zM3.500 10h5v3h-1v-2h-3v2h-1z" /><circle cx="13" cy="1.500" r=".9" /></svg>
          </RailButton>
        </RailGroup>
        <RailGroup>
          <RailButton aria-label="Cloud">
            <svg width="16" height="14" viewBox="0 0 16 14"><circle cx="7" cy="8" r="5.800" fill="#3b4050" /><path d="M4 10.300C2.800 9.500 3.500 8 4.800 8c.3-2 3.300-2.200 3.800-.3 2-.2 2.400 2 .9 2.600z" fill="#fff" /><circle cx="12.500" cy="3.500" r="3.100" fill="#0fa27c" /><path d="m11 3.500 1.200 1.200L14 2.800" stroke="#fff" strokeWidth=".8" fill="none" /></svg>
          </RailButton>
          <RailButton aria-label="Add">
            <svg width="16" height="17" viewBox="0 0 16 17" fill="none" stroke="currentColor"><path d="M2.500 10.500h10M8 6v10M8 6l3 4" strokeWidth="1.100" /><circle cx="13" cy="3.800" r="3.500" fill="#f7b733" stroke="none" /><path d="M13 2.300v3M11.500 3.800h3" stroke="#fff" /></svg>
          </RailButton>
          <RailButton aria-label="Freehand">
            <svg width="11" height="12" viewBox="0 0 11 12" fill="none" stroke="currentColor" strokeWidth="1.100"><path d="M9.500 1C8 2.500 6 1 3.500 1.500 1 2 1 4 3 4s5.500-.5 6-1.500M3 4 2 7c2.500-1.500 6.500-1.500 7 .8.3 2.700-5 4-6.500 2C1.500 8 4.500 6.500 6 8.500" /></svg>
          </RailButton>
          <RailButton aria-label="Lessons">
            <svg width="10" height="8" viewBox="0 0 10 8" fill="#3fc97f"><path d="M0 2.200C3 1.500 4 .5 5 .2c1 .3 2 1.300 5 2-2 1-3 1-5 1s-3 0-5-1zM1.500 4C4 4.500 6 4.500 8.500 4v3c-2 1.200-5 1.200-7 0z" /></svg>
          </RailButton>
          <RailButton aria-label="Settings">
            <svg width="10" height="10" viewBox="0 0 10 10" fill="none" stroke="currentColor"><circle cx="5" cy="5" r="2.700" strokeWidth="2" /><circle cx="5" cy="5" r="4.300" strokeWidth="1.200" strokeDasharray="1.700 1.680" /></svg>
          </RailButton>
        </RailGroup>
      </Rail>
      <Slide>
        <Seal />
        <Outline>
          <li>I.  Rigid Body and Center of Mass</li>
          <li>II.  Rotational Energy and Moment of Inertia</li>
          <li>III.  Torque and Static Equilibrium</li>
          <li>IV.  Rotational Dynamics and Angular Momentum</li>
        </Outline>
        <SlideNav><NavSymbols /></SlideNav>
        <SlideFooter>
          <span>Dzuhri Radityo Utomo</span>
          <span>TKU211121  Classical Mechanics</span>
        </SlideFooter>
      </Slide>
    </Workspace>
    <ToolPill>
      <Tool $on aria-label="Pan">
        <svg width="12" height="12" viewBox="0 0 12 12" fill="none" stroke="#fff" strokeLinecap="round"><path d="M3.800 6.500 3 3M5.500 6V1.500M7.300 6l.5-4M9 6.500l1-3M3 9 .9 6.500" strokeWidth="1.500" /><path d="M3.200 5.500h6.300v2c0 2-1 3.500-2.200 3.500H5.200L3 9z" fill="#fff" /></svg>
      </Tool>
      <Tool aria-label="Select">
        <svg width="10" height="10" viewBox="0 0 10 10" fill="#fff"><path d="M.5.500 10 3.500 6 5.500 3 9.800z" /></svg>
      </Tool>
      <PillRule />
      {tools.map((t, i) => (
        <Tool key={i}>
          <ToolGlyph kind={t.kind} color={t.color} />
          <ToolCount>{t.count}</ToolCount>
        </Tool>
      ))}
      <PillEnd>
        <Dot $bg="#000" $size={15} aria-label="Add tool">
          <svg width="7" height="7" viewBox="0 0 7 7" stroke="#2e7d52"><path d="M3.500 0v7M0 3.500h7" /></svg>
        </Dot>
        <Dot $bg="#000" $size={15} aria-label="Home"><BrandMarkLight size={9} /></Dot>
      </PillEnd>
    </ToolPill>
  </Screen>
);

const ParticipantsPanel = () => (
  <Panel>
    <PanelHeader>
      <h2>Participants</h2>
      <WindowButton aria-label="Close participants"><Cross size={12} /></WindowButton>
    </PanelHeader>
    <InviteBox>
      <input placeholder="Invite someone or dial a number" aria-label="Invite someone or dial a number" />
      <svg width="16" height="16" viewBox="0 0 16 16" fill="none" stroke="#fff" strokeWidth="1.600"><circle cx="6.500" cy="6.500" r="4.900" /><path d="m10 10 5 5" /></svg>
    </InviteBox>
    <GroupHeader>
      <svg width="8" height="5" viewBox="0 0 8 5" fill="#8f8f8f"><path d="M.5.500h7L4 4.500z" /></svg>
      <span>In this meeting (55)</span>
      <OutlineButton $width={72} $small>Mute all</OutlineButton>
    </GroupHeader>
    <Roster>
      {roster.map((p) => (
        <RosterRow key={p.name}>
          <Avatar $bg={p.bg} $fg={p.fg} $size={32}>
            {p.name[0].toUpperCase()}
            <Presence $state={p.state}>
              {p.state === "free" && <svg width="6" height="5" viewBox="0 0 6 5" fill="none" stroke="#1f1f1f"><path d="m.8 2.500 1.500 1.500L5.200 1" /></svg>}
              {p.state === "dnd" && <svg width="5" height="1" viewBox="0 0 5 1"><path d="M0 .5h5" stroke="#1f1f1f" /></svg>}
            </Presence>
          </Avatar>
          <RosterName>
            {p.name}
            {p.role && <small>{p.role}</small>}
          </RosterName>
          {p.role ? <MicOn /> : <MicOff />}
        </RosterRow>
      ))}
    </Roster>
    <ScrollThumb />
    <Scribble width="320" height="260" viewBox="0 0 320 260" fill="none" stroke="#e81b1c" strokeWidth="6" strokeLinecap="round" strokeLinejoin="round">
      <path d="M21 151C30 150 34 151 40 154 50 156 68 156 80 154 100 150 140 142 167 138 185 136 197 136 206 137 222 141 232 145 237 151 241 160 251 172 252 181 250 189 238 193 232 193 222 195 214 193 207 192 165 193 140 191 120 190 95 186 60 189 8 193" />
    </Scribble>
  </Panel>
);

export default function App() {
  return (
    <>
      <GlobalStyle />
      <Shell>
        <TitleBar>
          <LoadLine />
          <WindowTitle>Microsoft Teams</WindowTitle>
          <WindowButton aria-label="Minimize"><Dash size={12} /></WindowButton>
          <WindowButton aria-label="Restore"><RestoreGlyph size={14} /></WindowButton>
          <WindowButton aria-label="Close"><Cross size={12} /></WindowButton>
        </TitleBar>
        <CallBar>
          <svg width="16" height="16" viewBox="0 0 16 16"><circle cx="8" cy="8" r="7.200" fill="none" stroke="#fff" strokeWidth="1.500" /><circle cx="8" cy="8" r="5" fill="#c4314b" /></svg>
          <Timer>--:--</Timer>
          <OutlineButton $width={142}>Request control</OutlineButton>
          <Divider $first />
          <CallButton $active aria-label="Participants"><PeopleIcon /></CallButton>
          <CallButton aria-label="Reactions"><ReactIcon /></CallButton>
          <CallButton aria-label="More">
            <svg width="20" height="6" viewBox="0 0 20 6" fill="#f0f0f0"><circle cx="3.500" cy="3" r="2" /><circle cx="10" cy="3" r="2" /><circle cx="16.500" cy="3" r="2" /></svg>
          </CallButton>
          <Divider />
          <CallButton aria-label="Camera"><CameraOff /></CallButton>
          <CallButton aria-label="Microphone"><ToolbarMicOff /></CallButton>
          <CallButton aria-label="Share">
            <svg width="20" height="16" viewBox="0 0 20 16"><rect width="20" height="16" rx="2.500" fill="#fff" /><path d="M10 13V3.500M6.500 6.500 10 3l3.500 3.500" fill="none" stroke="#1f1f1f" strokeWidth="1.300" /></svg>
          </CallButton>
          <LeaveButton>
            <svg width="20" height="10" viewBox="0 0 20 10" fill="#fff"><path d="M10 1C15.500 1 19 3.500 19 7c0 1.300-.6 1.900-1.700 1.700l-2.500-.5c-1-.2-1.300-.7-1.300-1.600V5c-2-.8-5-.8-7 0v1.600c0 .9-.3 1.400-1.300 1.600l-2.500.5C1.600 8.900 1 8.300 1 7c0-3.500 3.500-6 9-6z" /></svg>
            Leave
          </LeaveButton>
        </CallBar>
        <Body>
          <Meeting>
            <Banner>
              <svg width="18" height="16" viewBox="0 0 18 16"><path d="M9 .5c.5 0 .8.200 1 .6l7 13c.4.800 0 1.400-.8 1.400H1.800c-.8 0-1.200-.6-.8-1.400l7-13c.2-.4.500-.6 1-.6z" fill="#fff" /><path d="M9 5v5M9 11.500v2" stroke="#3d3e66" strokeWidth="1.700" /></svg>
              <BannerText>
                <b>Recording has started.</b>
                This meeting is being recorded. By joining, you are giving consent for this meeting to be recorded.{" "}
                <a href="#privacy">Privacy policy</a>
              </BannerText>
              <OutlineButton $width={96} $clear>Dismiss</OutlineButton>
            </Banner>
            <Strip>
              <VideoTile />
              <Attendees>
                {attendees.map((a) => (
                  <Attendee key={a.name}>
                    <Avatar $bg={a.bg} $fg={a.fg} $size={70}>{a.letter}</Avatar>
                    <AttendeeName $clipped={a.clipped}>
                      <span>{a.name}</span>
                      <MicOff size={12} filled />
                    </AttendeeName>
                  </Attendee>
                ))}
                <li><MoreBubble>+50</MoreBubble></li>
              </Attendees>
              <SelfTile>
                <Avatar $bg="#e9dedb" $fg="#5d4338" $size={56}>M</Avatar>
              </SelfTile>
            </Strip>
            <Stage>
              <SharedScreen />
              <PresenterName>dzuhri.r.u</PresenterName>
            </Stage>
          </Meeting>
          <ParticipantsPanel />
        </Body>
        <Taskbar>
          <StartGroup>
            <TaskButton aria-label="Start">
              <svg width="16" height="16" viewBox="0 0 16 16" fill="#fff"><path d="M0 2.200 6.500 1.300v6.300H0zM7.400 1.200 16 0v7.600H7.400zM0 8.400h6.500v6.300L0 13.800zM7.400 8.400H16V16l-8.600-1.200z" /></svg>
            </TaskButton>
            <TaskButton aria-label="Search">
              <svg width="17" height="17" viewBox="0 0 17 17" fill="none" stroke="#fff" strokeWidth="1.400"><circle cx="10.500" cy="6" r="5.200" /><path d="M7 10 .8 16.300" /></svg>
            </TaskButton>
          </StartGroup>
          <Gripper />
          <PinnedApps>
            {apps.map((a) => (
              <TaskButton key={a.name} $run={a.run} aria-label={a.name}>{a.icon}</TaskButton>
            ))}
          </PinnedApps>
          <Gripper />
          <Tray>
            <TrayButton $width={18} aria-label="Hidden icons">
              <svg width="12" height="7" viewBox="0 0 12 7" fill="none" stroke="#fff" strokeWidth="1.300"><path d="m.7 6.300 5.300-5.300 5.300 5.300" /></svg>
            </TrayButton>
            <TrayButton $width={28} aria-label="Microphone in use">
              <svg width="12" height="16" viewBox="0 0 12 16" fill="none" stroke="#fff"><rect x="3" y=".5" width="6" height="11" rx="1.500" fill="#fff" /><path d="M1 9v2.500c0 1 .5 1.500 1.500 1.500h7c1 0 1.500-.5 1.500-1.500V9M6 13v2M3.500 15.500h5" /></svg>
            </TrayButton>
            <TrayButton $width={20} aria-label="Volume">
              <svg width="17" height="14" viewBox="0 0 17 14" fill="none" stroke="#fff"><path d="M1 5h2.500L7 1.500v11L3.500 9H1zM9 5c1 1.200 1 2.800 0 4M11 3c2 2.500 2 5.500 0 8" /><path d="M13.500 1.500c3 3.500 3 7.500 0 11" stroke="#888" /></svg>
            </TrayButton>
            <TrayButton $width={30} aria-label="Battery">
              <svg width="17" height="14" viewBox="0 0 17 14" fill="none" stroke="#fff"><path d="M5 4.500h10v7H4V9M16 6.500v3M.5 3.500h5v2.500l-1.500 1.500H2L.5 6zM1.500 1v2.500M4.500 1v2.500M3 7.500V10" /><path d="M7 6.500h6.500v3H6V8z" fill="#fff" stroke="none" /></svg>
            </TrayButton>
            <TrayButton $width={20} aria-label="Network">
              <svg width="14" height="14" viewBox="0 0 14 14" fill="none" stroke="#ddd"><path d="M1 13.500C1 6.500 6 1.500 13.500 1.500M4 13.500c0-5 4-9 9.500-9M7 13.500c0-3.500 3-6 6.500-6" /><circle cx="11.500" cy="12" r="1.500" fill="#fff" stroke="none" /></svg>
            </TrayButton>
            <TrayButton $width={34} aria-label="Ink">
              <svg width="17" height="16" viewBox="0 0 17 16" fill="none" stroke="#fff" strokeWidth="1.100"><path d="M6 8C2 6.500 0 10 1 12.500s4 2.500 5 1l6-12c1-1.500 3-.5 2.500 1L8 14l-2.500 1.500.5-3M10 9.500c2-2 4-2.500 6-1.500-.5 2-2.500 2.500-4.500 2" /></svg>
            </TrayButton>
            <TrayButton $width={34}>ENG</TrayButton>
            <TrayButton $width={64}>1:02 PM</TrayButton>
            <TrayButton $width={36} aria-label="Notifications">
              <svg width="16" height="16" viewBox="0 0 16 16"><path d="M0 .5h16v12h-5v3L8 12.500H0z" fill="#fff" /><path d="M3 4h10M3 6.500h10M3 9h6.500" stroke="#2a2624" /></svg>
            </TrayButton>
            <DesktopEdge />
          </Tray>
        </Taskbar>
      </Shell>
    </>
  );
}
